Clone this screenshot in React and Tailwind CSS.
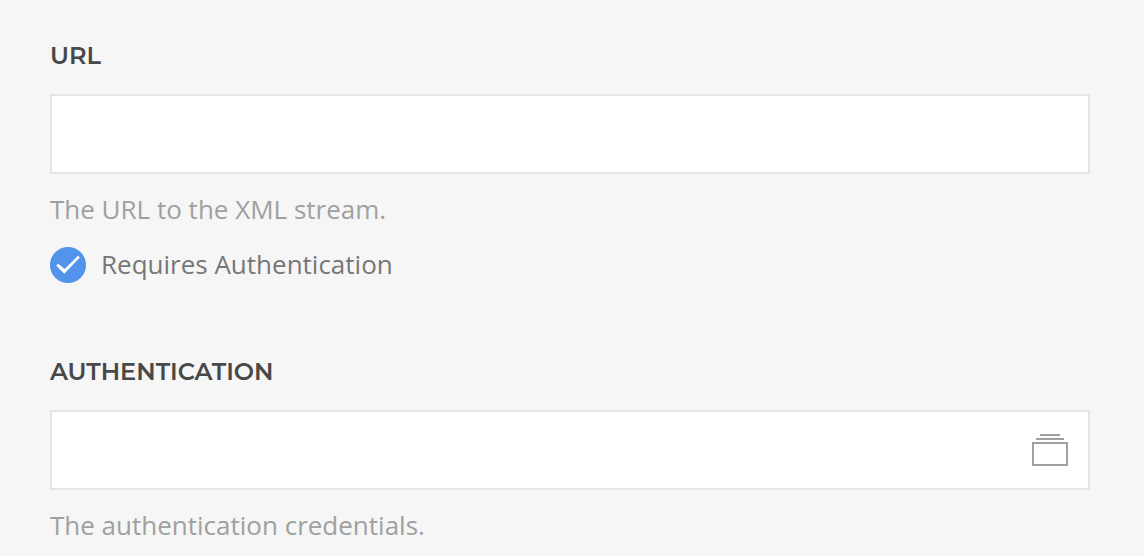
import { useState } from "react";

function Field({ id, label, hint, children, button }) {
  return (
    <div>
      <label htmlFor={id} className="block font-['Montserrat',Inter,sans-serif] text-[24px] leading-8 font-semibold uppercase text-[#484848]">
        {label}
      </label>
      <div className="mt-[22px] flex h-20 items-center border-2 border-[#e5e5e5] bg-white">
        <input id={id} type="text" aria-describedby={id + "-hint"} className="h-full min-w-0 flex-1 bg-transparent px-5 text-[26px] text-[#666666] outline-none" />
        {button}
      </div>
      <p id={id + "-hint"} className="mt-[18px] text-[26px] leading-[34px] text-[#a0a0a0]">{hint}</p>
      {children}
    </div>
  );
}

export default function App() {
  const [checked, setChecked] = useState(true);
  return (
    <main className="min-h-screen bg-[#f6f6f6] pt-10 pr-[54px] pl-[50px] font-['Open_Sans','Noto_Sans',sans-serif]">
      <Field id="url" label="URL" hint="The URL to the XML stream.">
        <label className="mt-[21px] flex items-start gap-[15px] text-[26px] leading-[34px] text-[#777777]">
          <span className="grid size-9 place-items-center">
            <input type="checkbox" checked={checked} onChange={(e) => setChecked(e.target.checked)} className="peer col-start-1 row-start-1 size-9 appearance-none rounded-full border-2 border-[#cccccc] bg-white checked:border-[#5294ec] checked:bg-[#5294ec]" />
            <svg viewBox="0 0 36 36" fill="white" className="pointer-events-none col-start-1 row-start-1 size-9 opacity-0 peer-checked:opacity-100">
              <path d="M6.2 18.6 8.2 16.8 14.6 22 28 8.8 29.8 10.4 14.2 26.8Z" />
            </svg>
          </span>
          Requires Authentication
        </label>
      </Field>
      <div className="mt-[73px]">
        <Field
          id="authentication"
          label="Authentication"
          hint="The authentication credentials."
          button={
            <button type="button" aria-label="Select credentials" className="mr-[18px] size-10">
              <svg viewBox="0 0 40 40" fill="none" stroke="#a0a0a0" strokeWidth="2" className="size-10">
                <path d="M10 5h20M6 9h28M3 13h34v22H3z" />
              </svg>
            </button>
          }
        />
      </div>
    </main>
  );
}
